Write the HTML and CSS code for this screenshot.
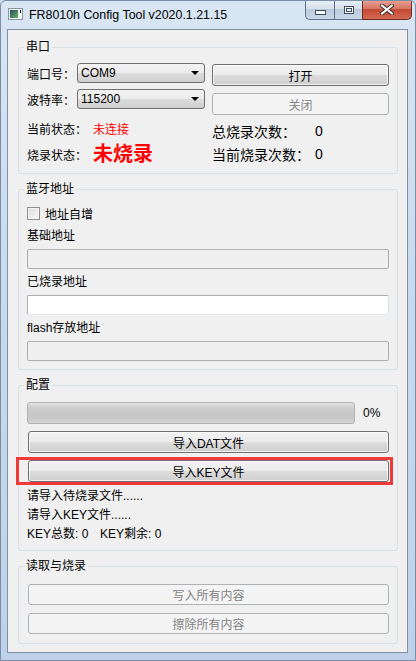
FILE: index.html
```html
<!DOCTYPE html>
<html lang="zh-CN">
<head>
  <meta charset="UTF-8" />
  <meta name="viewport" content="width=device-width, initial-scale=1.0"/>
  <title>FR8010h Config Tool v2020.1.21.15</title>
  <link rel="stylesheet" href="styles.css">
</head>
<body>
  <div class="window">
    <div class="titlebar">
      <svg class="app-icon" width="15" height="12" viewBox="0 0 15 12">
        <defs>
          <linearGradient id="pic" x1="0" y1="0" x2="1" y2="1">
            <stop offset="0" stop-color="#1d4f66"/>
            <stop offset="1" stop-color="#6fae62"/>
          </linearGradient>
        </defs>
        <rect x="0.5" y="0.5" width="14" height="11" fill="#f4f6f8" stroke="#8a949e"/>
        <rect x="2" y="2" width="8" height="8" fill="url(#pic)"/>
        <rect x="12" y="2" width="1" height="3" fill="#111"/>
      </svg>
      <span class="title">FR8010h Config Tool v2020.1.21.15</span>
      <div class="caption">
        <div class="cap cap-min"><span class="glyph-min"></span></div>
        <div class="cap cap-max"><span class="glyph-max"></span></div>
        <div class="cap cap-close">
          <svg width="14" height="11" viewBox="0 0 14 11">
            <path d="M2 1.5 L12 9.5 M12 1.5 L2 9.5" stroke="#3b2a28" stroke-width="4" stroke-linecap="square"/>
            <path d="M2 1.5 L12 9.5 M12 1.5 L2 9.5" stroke="#fff" stroke-width="2" stroke-linecap="square"/>
          </svg>
        </div>
      </div>
    </div>

    <div class="client">
      <fieldset class="group group-serial">
        <legend>串口</legend>
        <div class="serial">
          <div class="col">
            <div class="field-row">
              <span class="row-label">端口号：</span>
              <div class="combo">COM9<i class="arrow"></i></div>
            </div>
            <div class="field-row baud-row">
              <span class="row-label">波特率：</span>
              <div class="combo">115200<i class="arrow"></i></div>
            </div>
            <div class="state-row conn-row">
              <span class="state-label">当前状态：</span>
              <span class="red">未连接</span>
            </div>
            <div class="state-row burn-row">
              <span class="state-label">烧录状态：</span>
              <span class="red big">未烧录</span>
            </div>
          </div>
          <div class="col">
            <button class="btn open-btn">打开</button>
            <button class="btn close-btn" disabled>关闭</button>
            <div class="count-row total-row">
              <span class="count-label">总烧录次数：</span>
              <span>0</span>
            </div>
            <div class="count-row now-row">
              <span class="count-label">当前烧录次数：</span>
              <span>0</span>
            </div>
          </div>
        </div>
      </fieldset>

      <fieldset class="group group-ble">
        <legend>蓝牙地址</legend>
        <label class="check-row"><span class="checkbox"></span>地址自增</label>
        <div class="field-label first">基础地址</div>
        <div class="line-edit disabled"></div>
        <div class="field-label">已烧录地址</div>
        <div class="line-edit"></div>
        <div class="field-label">flash存放地址</div>
        <div class="line-edit disabled"></div>
      </fieldset>

      <fieldset class="group group-config">
        <legend>配置</legend>
        <div class="progress-row">
          <div class="progress"></div>
          <span class="percent">0%</span>
        </div>
        <button class="btn wide dat-btn">导入DAT文件</button>
        <div class="highlight">
          <button class="btn wide">导入KEY文件</button>
        </div>
        <div class="info">
          <div>请导入待烧录文件......</div>
          <div>请导入KEY文件......</div>
          <div><span class="key-total">KEY总数: 0</span>KEY剩余: 0</div>
        </div>
      </fieldset>

      <fieldset class="group group-rw">
        <legend>读取与烧录</legend>
        <button class="btn wide write-btn" disabled>写入所有内容</button>
        <button class="btn wide erase-btn" disabled>擦除所有内容</button>
      </fieldset>
    </div>
  </div>
</body>
</html>
```

FILE: styles.css
```css
body {
  margin: 0;
  background: #c8daee;
  font-family: "Liberation Sans", "Noto Sans CJK SC", sans-serif;
  font-size: 12px;
  color: #000;
}
.window {
  width: 416px;
  height: 661px;
  box-sizing: border-box;
  border: 1px solid #7b8ea6;
  border-radius: 6px 6px 0 0;
  background: linear-gradient(to bottom, #d9e6f3 0%, #c9dbee 40%, #bdd2e9 100%);
  overflow: hidden;
}

/* title bar */
.titlebar {
  display: flex;
  height: 28px;
  padding-left: 7px;
}
.app-icon {
  margin-top: 7px;
}
.title {
  margin-left: 6px;
  line-height: 28px;
  font-size: 12.4px;
  color: #000;
}
.caption {
  display: flex;
  margin-left: auto;
  margin-right: 3px;
  margin-top: -1px;
}
.cap {
  height: 20px;
  box-sizing: border-box;
  border: 1px solid #5f718a;
  border-top: none;
  display: flex;
  align-items: center;
  justify-content: center;
  background: linear-gradient(to bottom, #e9f0f7 0%, #d6e1ec 45%, #bccbdc 50%, #c9d7e6 100%);
}
.cap-min {
  width: 29px;
  border-right: none;
  border-radius: 0 0 0 5px;
}
.cap-max {
  width: 28px;
  border-right: none;
}
.cap-close {
  width: 50px;
  border-color: #6a2e26;
  border-radius: 0 0 5px 0;
  background: linear-gradient(to bottom, #e8a496 0%, #d77563 45%, #c44a34 50%, #d2684f 100%);
}
.glyph-min {
  width: 9px;
  height: 3px;
  margin-top: 5px;
  background: #fff;
  border: 1px solid #3a4a5e;
}
.glyph-max {
  width: 8px;
  height: 6px;
  border: 1px solid #3a4a5e;
  box-shadow: inset 0 0 0 1px #fff, inset 0 0 0 2px #3a4a5e;
  background: #e8eef5;
}

/* client area */
.client {
  height: 624px;
  box-sizing: border-box;
  margin: 0 7px 0 6px;
  border: 1px solid #8191a3;
  background: #f0f0f0;
  padding: 10px 9px 0 10px;
}
.group {
  margin: 0 0 8px;
  padding: 0 8px;
  border: 1px solid #d5dfe5;
  border-radius: 3px;
  min-width: 0;
}
.group legend {
  padding: 0 2px;
  margin-left: -3px;
  line-height: 14px;
}

/* serial group */
.serial {
  display: grid;
  grid-template-columns: 178px 178px;
  column-gap: 7px;
  padding: 9px 0 9px;
}
.col {
  display: flex;
  flex-direction: column;
}
.field-row {
  display: flex;
  align-items: center;
  height: 20px;
}
.baud-row {
  margin-top: 6px;
}
.row-label {
  width: 50px;
}
.combo {
  width: 128px;
  height: 20px;
  box-sizing: border-box;
  border: 1px solid #707070;
  border-radius: 3px;
  padding-left: 3px;
  display: flex;
  align-items: center;
  background: linear-gradient(to bottom, #f2f2f2 0%, #ebebeb 50%, #dddddd 50%, #cfcfcf 100%);
}
.arrow {
  margin-left: auto;
  margin-right: 5px;
  width: 0;
  height: 0;
  border-left: 4px solid transparent;
  border-right: 4px solid transparent;
  border-top: 4px solid #000;
}
.state-row {
  display: flex;
  align-items: center;
  height: 20px;
}
.conn-row {
  margin-top: 9px;
}
.burn-row {
  margin-top: 6px;
}
.state-label {
  width: 66px;
}
.red {
  color: #ff0000;
}
.big {
  font-size: 20px;
  font-weight: bold;
  line-height: 20px;
}
.count-row {
  display: flex;
  align-items: center;
  height: 20px;
  font-size: 14px;
}
.total-row {
  margin-top: 6px;
}
.now-row {
  margin-top: 3px;
}
.count-label {
  width: 103px;
  white-space: nowrap;
}

/* buttons */
.btn {
  font-family: inherit;
  font-size: 12px;
  color: #000;
  height: 22px;
  padding: 0;
  box-sizing: border-box;
  border: 1px solid #707070;
  border-radius: 3px;
  background: linear-gradient(to bottom, #f2f2f2 0%, #ebebeb 50%, #dddddd 50%, #cfcfcf 100%);
  box-shadow: inset 0 0 0 1px rgba(255, 255, 255, 0.7);
}
.btn:disabled {
  color: #838383;
  border-color: #adb2b5;
  background: #f4f4f4;
  box-shadow: none;
}
.open-btn {
  width: 177px;
  margin-top: 1px;
}
.close-btn {
  width: 177px;
  margin-top: 7px;
}
.wide {
  display: block;
  width: 361px;
  margin-left: 1px;
}

/* bluetooth group */
.check-row {
  display: flex;
  align-items: center;
  height: 16px;
  margin-top: 9px;
}
.checkbox {
  width: 13px;
  height: 13px;
  box-sizing: border-box;
  border: 1px solid #8f8f8f;
  margin-right: 5px;
  background: linear-gradient(135deg, #dcdcdc, #fbfbfb);
  box-shadow: inset 0 0 0 1px #f4f4f4;
}
.field-label {
  line-height: 16px;
  margin-top: 5px;
}
.field-label.first {
  margin-top: 7px;
}
.line-edit {
  height: 20px;
  box-sizing: border-box;
  margin-top: 5px;
  border: 1px solid #abadb3;
  border-bottom-color: #e3e9ef;
  border-right-color: #dbdfe6;
  border-radius: 2px;
  background: #fff;
}
.line-edit.disabled {
  border: 1px solid #adadad;
  background: #efefef;
}
.group-ble {
  padding-bottom: 8px;
}

/* config group */
.progress-row {
  display: flex;
  align-items: center;
  margin-top: 10px;
  height: 22px;
}
.progress {
  width: 328px;
  height: 22px;
  box-sizing: border-box;
  border: 1px solid #b2b2b2;
  border-radius: 3px;
  background: linear-gradient(to bottom, #e2e2e2 0%, #cdcdcd 25%, #c6c6c6 70%, #d4d4d4 100%);
}
.percent {
  margin-left: 8px;
}
.dat-btn {
  margin-top: 7px;
}
.highlight {
  position: relative;
  margin-top: 7px;
}
.highlight::after {
  content: "";
  position: absolute;
  left: -11px;
  right: -4px;
  top: -3px;
  bottom: -3px;
  border: 3px solid #f03a3a;
}
.info {
  margin-top: 5px;
  line-height: 19px;
}
.key-total {
  display: inline-block;
  width: 73px;
}
.group-config {
  padding-bottom: 6px;
}

/* read / write group */
.group-rw .btn {
  height: 21px;
}
.write-btn {
  margin-top: 11px;
}
.erase-btn {
  margin-top: 8px;
}
.group-rw {
  padding-bottom: 9px;
}
```
